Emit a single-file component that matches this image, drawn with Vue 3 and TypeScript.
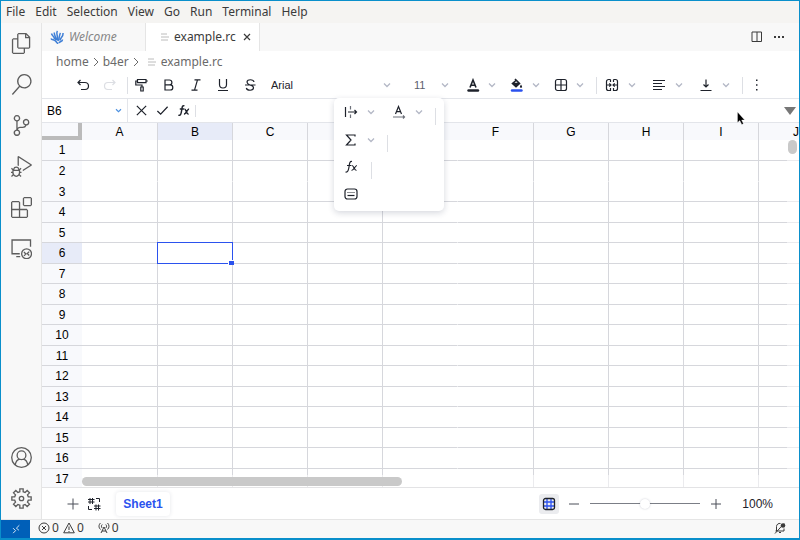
<script setup lang="ts">
import { ref } from 'vue'

const menus = ['File', 'Edit', 'Selection', 'View', 'Go', 'Run', 'Terminal', 'Help']
const columns = ['A', 'B', 'C', 'D', 'E', 'F', 'G', 'H', 'I', 'J']
const rows = Array.from({ length: 17 }, (_, i) => i + 1)
const activeCol = 'B'
const activeRow = 6

const cellName = ref(activeCol + activeRow)
const formula = ref('')
const zoom = ref(100)

interface Activity { name: string; path: string; stroke?: boolean }

// Outline of a cog with eight flat teeth on a 24 unit grid.
function cogPath(): string {
  const points: string[] = []
  for (let i = 0; i < 8; i++) {
    const base = (i * Math.PI) / 4
    const tooth: [number, number][] = [[-0.24, 8], [-0.17, 11.2], [0.17, 11.2], [0.24, 8]]
    for (const [offset, radius] of tooth) {
      const a = base + offset
      points.push(`${(12 + radius * Math.sin(a)).toFixed(2)} ${(12 - radius * Math.cos(a)).toFixed(2)}`)
    }
  }
  return `M${points.join('L')}Z`
}

const topActivities: Activity[] = [
  { name: 'Explorer', path: 'M17.5 0h-9L7 1.5V6H2.5L1 7.5v15.07L2.5 24h12.07L16 22.57V18h4.7l1.3-1.43V4.5L17.5 0zm0 2.12l2.38 2.38H17.5V2.12zm-3 20.38h-12v-15H7v9.07L8.5 18h6v4.5zm6-6h-12v-15H16V6h4.5v10.5z' },
  { name: 'Search', path: 'M15.25 0a8.25 8.25 0 0 0-6.18 13.72L1 22.88l1.12 1 8.05-9.12A8.251 8.251 0 1 0 15.25.01V0zm0 15a6.75 6.75 0 1 1 0-13.5 6.75 6.75 0 0 1 0 13.5z' },
  { name: 'Source Control', path: 'M21.007 8.222A3.738 3.738 0 0 0 15.045 5.2a3.737 3.737 0 0 0 1.156 6.583 2.988 2.988 0 0 1-2.668 1.67h-2.99a4.456 4.456 0 0 0-2.989 1.165V7.4a3.737 3.737 0 1 0-1.494 0v9.117a3.776 3.776 0 1 0 1.816.099 2.99 2.99 0 0 1 2.668-1.667h2.99a4.484 4.484 0 0 0 4.223-3.039 3.736 3.736 0 0 0 3.25-3.687zM4.565 3.738a2.242 2.242 0 1 1 4.484 0 2.242 2.242 0 0 1-4.484 0zm4.484 16.441a2.242 2.242 0 1 1-4.484 0 2.242 2.242 0 0 1 4.484 0zm8.221-9.715a2.242 2.242 0 1 1 0-4.485 2.242 2.242 0 0 1 0 4.485z' },
  { name: 'Run and Debug', path: 'M10.94 13.5l-1.32 1.32a3.73 3.73 0 0 0-7.24 0L1.06 13.5 0 14.56l1.72 1.72-.22.22V18H0v1.5h1.5v.08c.077.489.214.966.41 1.42L0 22.94 1.06 24l1.65-1.65A4.308 4.308 0 0 0 6 24a4.31 4.31 0 0 0 3.29-1.65L10.94 24 12 22.94 10.09 21c.198-.464.336-.951.41-1.45v-.1H12V18h-1.5v-1.5l-.22-.22L12 14.56l-1.06-1.06zM6 13.5a2.25 2.25 0 0 1 2.25 2.25h-4.5A2.25 2.25 0 0 1 6 13.5zm3 6a3.33 3.33 0 0 1-3 3 3.33 3.33 0 0 1-3-3v-2.25h6v2.25zm14.76-9.9v1.26L13.5 17.37V15.6l8.5-5.37L9 2v9.46a5.07 5.07 0 0 0-1.5-.72V.63L8.64 0l15.12 9.6z' },
  { name: 'Extensions', path: 'M13.5 1.5L15 0h7.5L24 1.5V9l-1.5 1.5H15L13.5 9V1.5zm1.5 0V9h7.5V1.5H15zM0 15V6l1.5-1.5H9L10.5 6v7.5H18l1.5 1.5v7.5L18 24H1.5L0 22.5V15zm9-1.5V6H1.5v7.5H9zM9 15H1.5v7.5H9V15zm1.5 7.5H18V15h-7.5v7.5z' },
  { name: 'Remote Explorer', stroke: true, path: 'M22.3 10V2.3H1.2V18H10M6 21.3H10.5M12.2 18a5.6 5.6 0 1 0 11.2 0a5.6 5.6 0 1 0-11.2 0M14.8 16l2.2 2.2l-2.2 2.2M20.8 15.6l-2.2 2.2l2.2 2.2' },
]
const bottomActivities: Activity[] = [
  { name: 'Accounts', stroke: true, path: 'M.8 12a11.2 11.2 0 1 0 22.4 0a11.2 11.2 0 1 0-22.4 0M7 9.4a5 5 0 1 0 10 0a5 5 0 1 0-10 0M4.8 20.3C5.5 16.5 7.5 14.4 9.6 13.8M19.2 20.3C18.5 16.5 16.5 14.4 14.4 13.8' },
  { name: 'Manage', stroke: true, path: cogPath() + 'M9.5 12a2.500 2.500 0 1 0 5 0a2.500 2.500 0 1 0-5 0' },
]
</script>

<template>
  <div class="window">
    <nav class="menubar" aria-label="Application menu">
      <button v-for="m in menus" :key="m">{{ m }}</button>
    </nav>

    <div class="workbench">
      <aside class="activity">
        <button v-for="a in topActivities" :key="a.name" :aria-label="a.name">
          <svg viewBox="0 0 24 24" :class="{ stroke: a.stroke }"><path :d="a.path" /></svg>
        </button>
        <span class="spacer"></span>
        <button v-for="a in bottomActivities" :key="a.name" :aria-label="a.name">
          <svg viewBox="0 0 24 24" :class="{ stroke: a.stroke }"><path :d="a.path" /></svg>
        </button>
      </aside>

      <main class="editor">
        <div class="tabs">
          <button class="tab welcome">
            <svg class="logo" viewBox="0 0 14 14" aria-hidden="true">
              <path d="M1.500 3.500C2 6 4 5.500 4.500 9M4.500 2.500C3.500 4.500 6 6 6 10M7.500 1C5.500 3.500 8.500 5 7 10.500M10.500 3C9 5 10 7 8 11M13 3C13.500 7 10.500 7 10 10.500M1 8.500C2 11 4 8.500 6 11.500S8 13 7 13M12.500 9.500C12.500 12 10 11 9 13" />
            </svg>
            Welcome
          </button>
          <div class="tab current">
            <svg class="lines" viewBox="0 0 8 8" aria-hidden="true"><path d="M0 1h6M0 4h8M0 7h7" /></svg>
            <span>example.rc</span>
            <button class="close" aria-label="Close example.rc">
              <svg viewBox="0 0 8 8"><path d="M1 1l6 6M7 1l-6 6" /></svg>
            </button>
          </div>
          <span class="spacer"></span>
          <button class="tabaction" aria-label="Split editor">
            <svg viewBox="0 0 12 12"><path d="M1 1h9.500v9.500h-9.500zM6 1v9.500" /></svg>
          </button>
          <button class="tabaction" aria-label="More actions">
            <svg viewBox="0 0 12 12"><path class="solid" d="M1 5h2v2h-2zM5 5h2v2h-2zM9 5h2v2h-2z" /></svg>
          </button>
        </div>

        <nav class="crumbs" aria-label="Breadcrumb">
          <a href="#home">home</a>
          <svg class="sep" viewBox="0 0 6 10"><path d="M1 1l4 4l-4 4" /></svg>
          <a href="#b4er">b4er</a>
          <svg class="sep" viewBox="0 0 6 10"><path d="M1 1l4 4l-4 4" /></svg>
          <svg class="lines" viewBox="0 0 8 8"><path d="M0 1h6M0 4h8M0 7h7" /></svg>
          <a href="#file">example.rc</a>
        </nav>

        <div class="toolbar" role="toolbar" aria-label="Formatting">
          <button class="tool" aria-label="Undo"><svg viewBox="0 0 14 14"><path d="M4.500 2L2 4.500L4.500 7M2 4.500h7a3.500 3.500 0 0 1 0 7H5" /></svg></button>
          <button class="tool" aria-label="Redo" disabled><svg viewBox="0 0 14 14"><path d="M9.500 2L12 4.500L9.500 7M12 4.500h-7a3.500 3.500 0 0 0 0 7H9" /></svg></button>
          <span class="rule near"></span>
          <button class="tool" aria-label="Format painter"><svg viewBox="0 0 14 14"><path d="M2.500 1.500h8.500v3.200h-8.500zM2.500 3H.800v4h6.200v2M11 3h1.800M5.800 9h2.400v4h-2.400z" /></svg></button>
          <button class="tool" aria-label="Bold"><svg viewBox="0 0 14 14"><path d="M3 2h4.500a2.400 2.400 0 0 1 0 4.800H3zM3 6.800h5.200a2.600 2.600 0 0 1 0 5.200H3z" /></svg></button>
          <button class="tool" aria-label="Italic"><svg viewBox="0 0 14 14"><path d="M5.500 1.800h6M2.500 12.200h6M8.500 1.800L5.500 12.200" /></svg></button>
          <button class="tool" aria-label="Underline"><svg viewBox="0 0 14 14"><path d="M3.500 1v5.500a3.500 3.500 0 0 0 7 0V1M2 12.500h10" /></svg></button>
          <button class="tool" aria-label="Strikethrough"><svg viewBox="0 0 14 14"><path d="M11 4C10.500 1 4 1 4 4C4 6 6 6.500 7 7C9 7.500 10.500 8 10.500 9.800C10.500 13 4 13 3.300 10M2 7h10.500" /></svg></button>

          <div class="pick font">
            <select aria-label="Font"><option>Arial</option></select>
            <svg class="chev" viewBox="0 0 8 6"><path d="M1 1.500l3 3l3-3" /></svg>
          </div>
          <div class="pick size">
            <select aria-label="Font size"><option>11</option></select>
            <svg class="chev" viewBox="0 0 8 6"><path d="M1 1.500l3 3l3-3" /></svg>
          </div>

          <div class="splits">
            <span class="split">
              <button aria-label="Text colour"><svg viewBox="0 0 14 14"><path class="heavy" d="M4 9.500L7 2L10 9.500M5 7.200h4" /><path class="bar" d="M2.500 12.500h9.500" /></svg></button>
              <button class="more" aria-label="Text colour options"><svg class="chev" viewBox="0 0 8 6"><path d="M1 1.500l3 3l3-3" /></svg></button>
            </span>
            <span class="split">
              <button aria-label="Fill colour"><svg viewBox="0 0 14 14"><path class="heavy" d="M5 1l4.500 4.500l-3.500 3.200l-3.500-3.200l3.500-3M2.800 5.500h6.500" /><path class="solid" d="M3 5.500h6.500l-3.500 3.200zM11 6.500l1 1.800a1.100 1.100 0 1 1-2 0z" /><path class="bar blue" d="M2 12.500h9.500" /></svg></button>
              <button class="more" aria-label="Fill colour options"><svg class="chev" viewBox="0 0 8 6"><path d="M1 1.500l3 3l3-3" /></svg></button>
            </span>
            <span class="split">
              <button aria-label="Borders"><svg viewBox="0 0 14 14"><rect x="1.500" y="1.500" width="11" height="11" rx="2" /><path d="M7 1.500v11M1.500 7h11" /></svg></button>
              <button class="more" aria-label="Border options"><svg class="chev" viewBox="0 0 8 6"><path d="M1 1.500l3 3l3-3" /></svg></button>
            </span>
          </div>
          <span class="rule far"></span>
          <div class="splits wide">
            <span class="split">
              <button aria-label="Merge cells"><svg viewBox="0 0 14 14"><path d="M5.500 1.500H3.500a2 2 0 0 0-2 2v7a2 2 0 0 0 2 2h2V10M5.500 1.500V4M8.500 1.500h2a2 2 0 0 1 2 2v7a2 2 0 0 1-2 2h-2V10M8.500 1.500V4M1.500 7h4M12.500 7h-4M4.300 5.300L6 7L4.300 8.700M9.700 5.300L8 7L9.700 8.700" /></svg></button>
              <button class="more" aria-label="Merge options"><svg class="chev" viewBox="0 0 8 6"><path d="M1 1.500l3 3l3-3" /></svg></button>
            </span>
            <span class="split">
              <button aria-label="Align left"><svg viewBox="0 0 14 14"><path d="M1 2.500h12M1 5.500h9M1 8.500h12M1 11.500h9" /></svg></button>
              <button class="more" aria-label="Horizontal alignment"><svg class="chev" viewBox="0 0 8 6"><path d="M1 1.500l3 3l3-3" /></svg></button>
            </span>
            <span class="split">
              <button aria-label="Align bottom"><svg viewBox="0 0 14 14"><path d="M7 1.500V9M4.500 6.500L7 9L9.500 6.500M1.500 12.500h11" /></svg></button>
              <button class="more" aria-label="Vertical alignment"><svg class="chev" viewBox="0 0 8 6"><path d="M1 1.500l3 3l3-3" /></svg></button>
            </span>
          </div>
          <span class="rule last"></span>
          <button class="tool" aria-label="More tools"><svg viewBox="0 0 14 14"><path class="solid" d="M6 1.500h1.500v1.500h-1.500zM6 6.300h1.500v1.500h-1.500zM6 11h1.500v1.500h-1.500z" /></svg></button>

          <div class="overflow">
            <div class="line">
              <span class="split">
                <button aria-label="Text wrap"><svg viewBox="0 0 14 14"><path d="M1.500 2v10" /><path class="muted" d="M6.500 1v3.500M6.500 9.500V13" /><path d="M4 7h8.500M10.500 5L12.500 7L10.500 9" /></svg></button>
                <button class="more" aria-label="Wrap options"><svg class="chev" viewBox="0 0 8 6"><path d="M1 1.500l3 3l3-3" /></svg></button>
              </span>
              <span class="split">
                <button aria-label="Text rotation"><svg viewBox="0 0 14 14"><path d="M3.500 9L6.500 1.500L9.500 9M4.500 6.700h4" /><path class="muted" d="M1 12h11M11 10.500l1.500 1.500l-1.500 1.500" /></svg></button>
                <button class="more" aria-label="Rotation options"><svg class="chev" viewBox="0 0 8 6"><path d="M1 1.500l3 3l3-3" /></svg></button>
              </span>
              <span class="rule"></span>
            </div>
            <div class="line">
              <span class="split">
                <button aria-label="Sum"><svg viewBox="0 0 14 14"><path d="M11 3.500V2H2.500L7 7L2.500 12H11V10.500" /></svg></button>
                <button class="more" aria-label="Function list"><svg class="chev" viewBox="0 0 8 6"><path d="M1 1.500l3 3l3-3" /></svg></button>
              </span>
              <span class="rule"></span>
            </div>
            <div class="line">
              <span class="split">
                <button aria-label="Insert function"><svg viewBox="0 0 14 14"><path d="M8 1.500C5.500 1 5.500 4 5 7S4 12.500 1.500 12M3 5.500h4.500M8 5.500C10 5.500 10 10.500 12.500 10.500M13 5.500C11 5.500 10 10.500 7.500 10.500" /></svg></button>
              </span>
              <span class="rule"></span>
            </div>
            <div class="line">
              <span class="split">
                <button aria-label="Shortcuts"><svg viewBox="0 0 14 14"><rect x="1" y="2" width="12" height="10" rx="2.500" /><path d="M3.500 8.500h7" /><path class="dots" d="M3.500 5.500h7" /></svg></button>
              </span>
            </div>
          </div>
        </div>

        <div class="formula">
          <label class="namebox">
            <input v-model="cellName" aria-label="Name box" />
            <svg class="chev" viewBox="0 0 8 6"><path d="M1 1.500l3 3l3-3" /></svg>
          </label>
          <button aria-label="Cancel"><svg viewBox="0 0 14 14"><path d="M2 2l10 10M12 2L2 12" /></svg></button>
          <button aria-label="Confirm"><svg viewBox="0 0 14 14"><path d="M1.500 7.500l3.500 3.500L12.500 3" /></svg></button>
          <button aria-label="Function"><svg viewBox="0 0 14 14"><path class="heavy" d="M8 2C5.500 1 5.500 4 5 7S4 13 1.500 12M3 5.500h4.500M8 5.500C10 5.500 10 11 12.500 11M13 5.500C11 5.500 10 11 7.500 11" /></svg></button>
          <input v-model="formula" class="entry" aria-label="Formula" />
          <button class="expand" aria-label="Expand formula bar"><svg viewBox="0 0 12 8"><path d="M0 0h12L6 8z" /></svg></button>
        </div>

        <div class="sheet">
          <table>
            <thead>
              <tr>
                <th class="corner" aria-label="Select all"></th>
                <th v-for="c in columns" :key="c" scope="col" :class="{ active: c === activeCol }">{{ c }}</th>
              </tr>
            </thead>
            <tbody>
              <tr v-for="r in rows" :key="r">
                <th scope="row" :class="{ active: r === activeRow }">{{ r }}</th>
                <td v-for="c in columns" :key="c" :class="{ selected: c === activeCol && r === activeRow }"></td>
              </tr>
            </tbody>
          </table>
          <div class="track vertical"><span></span></div>
          <div class="track horizontal"><span></span></div>
        </div>

        <footer class="sheetbar">
          <button aria-label="Add sheet"><svg viewBox="0 0 14 14"><path d="M7 1.500v11M1.500 7h11" /></svg></button>
          <button class="all" aria-label="All sheets"><svg viewBox="0 0 14 14"><path d="M3 1v6M5.500 1v6M1 2.500h6.500M1 5h6.500M9 1.500h3.500V5M1.500 9v3.500H5M9 7.500v6M11.500 7.500v6M7 9h6.500M7 11.500h6.500" /></svg></button>
          <button class="sheettab">Sheet1</button>
          <span class="spacer"></span>
          <button class="gridlines" aria-label="Toggle gridlines"><svg viewBox="0 0 14 14"><path class="mesh" d="M5 2v10M9 2v10M2 5h10M2 9h10" /><rect x="1.500" y="1.500" width="11" height="11" rx="2" /></svg></button>
          <button class="step" aria-label="Zoom out"><svg viewBox="0 0 14 14"><path d="M2 7h10" /></svg></button>
          <input v-model="zoom" class="slider" type="range" min="0" max="200" aria-label="Zoom" />
          <button class="step" aria-label="Zoom in"><svg viewBox="0 0 14 14"><path d="M7 2v10M2 7h10" /></svg></button>
          <output class="percent">{{ zoom }}%</output>
        </footer>
      </main>
    </div>

    <footer class="status">
      <button class="remote" aria-label="Remote window"><svg viewBox="0 0 12 12"><path d="M2.500 5l3 3l-3 3M10 1.500l-3.500 3.500l3 2.500" /></svg></button>
      <button class="item">
        <svg viewBox="0 0 12 12"><circle cx="6" cy="6" r="5" /><path d="M4 4l4 4M8 4l-4 4" /></svg>0
        <svg class="second" viewBox="0 0 12 12"><path d="M6 1L11.300 10.800H.700zM6 4.500v3.500M6 9v1" /></svg>0
      </button>
      <button class="item">
        <svg viewBox="0 0 12 12"><path d="M3 11L6 5L9 11M4 9h4M2.500 1C.500 3 .500 5.500 2.500 7.500M9.500 1c2 2 2 4.500 0 6.500M4.200 2.500c-1 1-1 2.500 0 3.500M7.800 2.500c1 1 1 2.500 0 3.500" /></svg>0
      </button>
      <span class="spacer"></span>
      <button class="item bell" aria-label="Notifications">
        <svg viewBox="0 0 12 12"><path d="M1.500 9h8.500V6.500M2.500 9V4.500a3.200 3.200 0 0 1 4-3M1 11.500L10 1.500M5 10.500h2" /><circle class="dot" cx="9" cy="3.500" r="2.300" /></svg>
      </button>
    </footer>

    <svg class="pointer" viewBox="0 0 8 13" aria-hidden="true"><path d="M.500 0v10.500l2.300-2l2 4l1.600-.800l-1.800-3.700h3z" /></svg>
  </div>
</template>

<style>
html, body, #app { height: 100%; }
body { margin: 0; }
</style>

<style scoped>
* { box-sizing: border-box; }
.window {
  position: relative;
  display: flex;
  flex-direction: column;
  height: 100%;
  overflow: hidden;
  border: 1px solid #0a8fcb;
  border-bottom-width: 2px;
  background: #f8f8f8;
  color: #3b3b3b;
  font: 12px/16px "Noto Sans", sans-serif;
}
button {
  display: flex;
  align-items: center;
  justify-content: center;
  padding: 0;
  border: 0;
  background: none;
  color: inherit;
  font: inherit;
}
svg { display: block; flex: none; fill: none; stroke: currentColor; }
.spacer { flex: 1; }

.menubar { display: flex; flex: none; gap: 10px; height: 22px; padding: 0 5px; background: #f5f4f2; }

.workbench { display: flex; flex: 1; min-height: 0; }
.activity { display: flex; flex: none; flex-direction: column; width: 41px; border-right: 1px solid #e5e5e5; }
.activity button { height: 41px; color: #5d5d5d; }
.activity svg { width: 21px; height: 21px; fill: currentColor; stroke: none; }
.activity svg.stroke { fill: none; stroke: currentColor; stroke-width: 1.5; }

.editor { display: flex; flex: 1; flex-direction: column; min-width: 0; background: #fff; }
.tabs { display: flex; flex: none; height: 28px; padding-right: 9px; background: #f8f8f8; }
.tab { display: flex; align-items: center; border-right: 1px solid #e5e5e5; }
.welcome { width: 104px; padding-left: 8px; gap: 5px; justify-content: flex-start; color: #868686; font-style: italic; }
.logo { width: 14px; height: 14px; stroke: #3f7fd6; stroke-width: 1.5; }
.current { width: 114px; padding-left: 15px; gap: 5px; background: #fff; }
.lines { width: 8px; height: 8px; stroke: #bcbcbc; }
.close { width: 16px; height: 16px; margin-left: auto; margin-right: 5px; }
.close svg { width: 8px; height: 8px; stroke-width: 1.2; }
.tabaction { width: 22px; }
.tabaction svg { width: 12px; height: 12px; }
.solid { fill: currentColor; stroke: none; }

.crumbs { display: flex; flex: none; align-items: center; gap: 4px; height: 21px; padding-left: 14px; color: #6a6a6a; }
.crumbs a { color: inherit; text-decoration: none; }
.sep { width: 6px; height: 10px; }
.crumbs .lines { margin: 0 1px 0 5px; }

.toolbar {
  position: relative;
  display: flex;
  flex: none;
  align-items: center;
  height: 27px;
  padding-left: 27px;
  border-bottom: 1px solid #e3e5ea;
  color: #1e222b;
}
.toolbar svg { width: 14px; height: 14px; stroke-width: 1.2; }
.tool { width: 27px; height: 24px; }
.tool:disabled { color: #dcdee3; }
.heavy { stroke-width: 1.6; }
.muted { stroke: #6d717a; }
.bar { stroke-width: 2.4; stroke-linecap: round; }
.bar.blue { stroke: #2b52ee; }
.dots { stroke-dasharray: 1 1; }
.toolbar .chev, .chev { width: 8px; height: 6px; color: #b4b8c6; stroke-width: 1.3; }
.rule { flex: none; width: 1px; height: 17px; background: #dddfe4; }
.near { margin-left: 4px; }
.far { margin: 0 3px 0 9px; }
.last { margin-left: 7px; }
.pick { display: grid; align-items: center; }
.pick > * { grid-area: 1 / 1; }
.pick .chev { justify-self: end; pointer-events: none; }
.pick select {
  padding: 0 8px;
  border: 0;
  background: none;
  color: inherit;
  appearance: none;
  font: 11px/16px "Liberation Sans", sans-serif;
}
.font { width: 128px; }
.size { width: 43px; margin: 0 12px 0 15px; }
.size select { color: #5b606c; }
.splits { display: flex; gap: 6px; }
.splits.wide { gap: 7px; }
.split { display: flex; align-items: center; }
.split button { width: 24px; height: 24px; }
.split .more { width: 14px; }
.wide .more, .overflow .more { width: 16px; }
.wide { padding-right: 1px; }

.overflow {
  position: absolute;
  z-index: 2;
  top: 26px;
  left: 292px;
  display: flex;
  flex-direction: column;
  gap: 3px;
  width: 110px;
  padding: 1px 5px 5px;
  border-radius: 5px;
  background: #fff;
  box-shadow: 0 2px 6px rgba(30, 40, 70, .18);
}
.line { display: flex; align-items: center; gap: 8px; }
.line .rule { align-self: flex-end; }
.line:first-child { height: 26px; }

.formula { display: flex; flex: none; align-items: center; height: 24px; padding-right: 3px; border-bottom: 1px solid #e3e5ea; color: #1e222b; }
.namebox { display: flex; align-items: center; align-self: stretch; width: 86px; margin-right: 3px; padding: 0 5px; border-right: 1px solid #e3e5ea; }
.namebox .chev { width: 7px; height: 5px; color: #4a8fe0; }
.formula input { min-width: 0; flex: 1; padding: 0; border: 0; outline: 0; background: none; color: #000; font: 12px/16px "Liberation Sans", sans-serif; }
.formula button { width: 21px; height: 20px; }
.formula button svg { width: 13px; height: 13px; stroke-width: 1.3; }
.formula .entry { height: 12px; margin-left: 1px; padding: 0 6px; border-left: 1px solid #dddfe4; }
.formula .expand { width: 12px; }
.formula .expand svg { width: 12px; height: 8px; fill: #777; stroke: none; }

.sheet { position: relative; flex: 1; min-height: 0; overflow: hidden; border-bottom: 1px solid #e3e3e5; }
table { width: 792px; table-layout: fixed; border-spacing: 0; color: #000; font: 12px/14px "Liberation Sans", sans-serif; }
th { padding: 0; background: #f8f9fc; font-weight: 400; text-align: center; }
thead th { width: 75px; height: 17px; border-right: 1px solid #d6d7dc; }
thead th:nth-child(2), thead th:nth-child(7) { width: 76px; }
thead th:nth-child(6) { border-right-color: #f8f9fc; }
thead .corner { width: 40px; border-right: 4px solid #bbb; border-bottom: 4px solid #bbb; }
tbody th, td { height: 21px; padding: 0; border-bottom: 1px solid #d6d7dc; }
tbody tr:nth-child(2n + 3) > * { height: 20px; }
td { border-right: 1px solid #d6d7dc; }
td:nth-child(6) { border-right-color: transparent; }
tbody tr:nth-child(2) > * { border-bottom-color: transparent; }
th.active { background: #e7ebf8; }
.selected { position: relative; }
.selected::before { position: absolute; inset: -1px; border: 1px solid #2b52ee; content: ""; }
.selected::after { position: absolute; right: -2px; bottom: -2px; width: 5px; height: 4px; border: solid #fff; border-width: 1px 0 0 1px; background: #2b52ee; content: ""; }
.track { position: absolute; background: rgba(255, 255, 255, .5); }
.track span { display: block; border-radius: 5px; background: #c9c9c9; }
.vertical { top: 17px; right: 0; bottom: 0; width: 12px; }
.vertical span { width: 9px; height: 14px; margin-left: 1px; }
.horizontal { right: 12px; bottom: 0; left: 40px; height: 12px; padding-top: 2px; }
.horizontal span { width: 320px; height: 9px; }

.sheetbar { display: flex; flex: none; align-items: center; height: 31px; padding: 0 26px 0 20px; color: #4b4f58; font: 12px/16px "Liberation Sans", sans-serif; }
.sheetbar button { width: 21px; height: 20px; }
.sheetbar svg { width: 14px; height: 14px; stroke-width: 1; }
.sheetbar .all { color: #1e222b; }
.sheetbar .sheettab { width: 54px; height: 24px; margin-left: 12px; border-radius: 4px; box-shadow: 0 0 4px rgba(30, 40, 70, .12); color: #2b52ee; font-size: 12px; font-weight: 700; }
.sheetbar .gridlines { width: 20px; border-radius: 3px; background: #ebecef; color: #1e222b; }
.sheetbar .gridlines svg { stroke-width: 1.3; }
.mesh { stroke: #2b52ee; }
.sheetbar .step { width: 30px; }
.slider { width: 112px; height: 12px; margin: 0; appearance: none; background: linear-gradient(#7b7e86, #7b7e86) center / 110px 1px no-repeat; }
.slider::-webkit-slider-thumb { width: 10px; height: 10px; appearance: none; border-radius: 50%; background: #fff; box-shadow: 0 0 2px rgba(30, 40, 70, .25); }
.percent { margin-left: 11px; color: #1e222b; }

.status { display: flex; flex: none; height: 19px; border-top: 1px solid #e5e5e5; }
.remote { width: 29px; background: #005fb8; color: #fff; }
.status svg { width: 12px; height: 12px; }
.status .remote svg { width: 10px; height: 10px; }
.item { height: 16px; gap: 2px; margin-left: 8px; }
.second { margin-left: 2px; }
.item + .item { margin-left: 14px; }
.bell { margin-right: 13px; }
.dot { fill: currentColor; stroke: none; }

.pointer { position: absolute; z-index: 3; top: 111px; left: 736px; width: 8px; height: 13px; fill: #000; stroke: #fff; stroke-width: .3; }
</style>
